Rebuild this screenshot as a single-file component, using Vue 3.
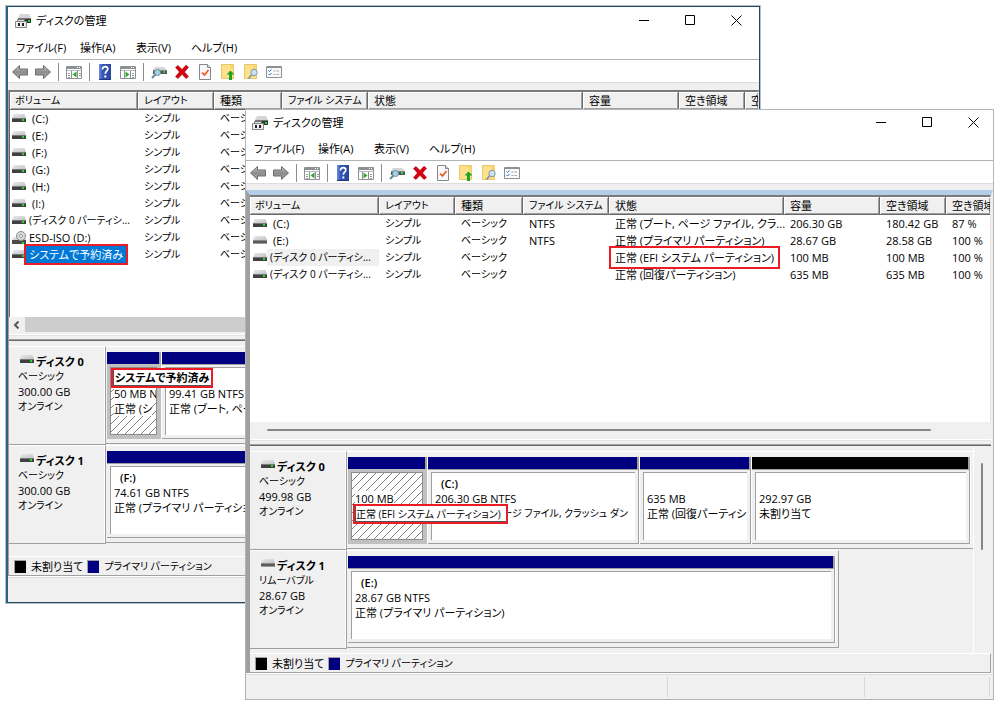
<script setup>
const cell = (volume, status = '', fs = '', size = '', free = '', pct = '', extra = {}) => ({
  volume, layout: 'シンプル', kind: 'ベーシック', fs, status, size, free, pct, icon: 'drive', ...extra
})

const headings = [
  { text: 'ボリューム', kana: true },
  { text: 'レイアウト', kana: true },
  { text: '種類' },
  { text: 'ファイル システム', kana: true },
  { text: '状態' },
  { text: '容量' },
  { text: '空き領域' },
  { text: '空き領域' }
]

const menus = ['ファイル(F)', '操作(A)', '表示(V)', 'ヘルプ(H)']

const tools = [
  { icon: 'prev', label: '戻る' },
  { icon: 'next', label: '進む' },
  { sep: true },
  { icon: 'tree', label: 'コンソール ツリー' },
  { sep: true },
  { icon: 'help', label: 'ヘルプ' },
  { icon: 'action', label: '操作ウィンドウ' },
  { sep: true },
  { icon: 'rescan', label: '再スキャン' },
  { icon: 'delete', label: '削除' },
  { icon: 'check', label: 'プロパティ' },
  { icon: 'up', label: '上へ' },
  { icon: 'find', label: '検索' },
  { icon: 'options', label: '設定' }
]

const windows = [
  {
    id: 'back',
    cols: [128, 76, 68, 86, 215, 96, 66],
    rows: [
      cell('(C:)', '', '', '', '', '', { letter: true }),
      cell('(E:)', '', '', '', '', '', { letter: true }),
      cell('(F:)', '', '', '', '', '', { letter: true }),
      cell('(G:)', '', '', '', '', '', { letter: true }),
      cell('(H:)', '', '', '', '', '', { letter: true }),
      cell('(I:)', '', '', '', '', '', { letter: true }),
      cell('(ディスク 0 パーティシ...', '', '', '', '', '', { kana: true }),
      cell('ESD-ISO (D:)', '', '', '', '', '', { icon: 'disc' }),
      cell('システムで予約済み', '', '', '', '', '', { selected: true })
    ],
    disks: [
      {
        name: 'ディスク 0', kind: 'ベーシック', size: '300.00 GB', icon: 'drive', segments: [
          { width: 55, hatched: true, lines: ['', '50 MB N', '正常 (シ'], note: 'システムで予約済み', noteAt: 'top' },
          { width: 400, lines: ['', '99.41 GB NTFS', '正常 (ブート, ページ ファイル)'] }
        ]
      },
      {
        name: 'ディスク 1', kind: 'ベーシック', size: '300.00 GB', icon: 'drive', segments: [
          { width: 455, letter: '(F:)', lines: ['74.61 GB NTFS', '正常 (プライマリ パーティション)'] }
        ]
      }
    ]
  },
  {
    id: 'front',
    cols: [129, 76, 68, 86, 175, 96, 66],
    rows: [
      cell('(C:)', '正常 (ブート, ページ ファイル, クラ...', 'NTFS', '206.30 GB', '180.42 GB', '87 %', { letter: true }),
      cell('(E:)', '正常 (プライマリ パーティション)', 'NTFS', '28.67 GB', '28.58 GB', '100 %', { letter: true, icon: 'usb' }),
      cell('(ディスク 0 パーティシ...', '正常 (EFI システム パーティション)', '', '100 MB', '100 MB', '100 %', { dim: true, marked: true, kana: true }),
      cell('(ディスク 0 パーティシ...', '正常 (回復パーティション)', '', '635 MB', '635 MB', '100 %', { kana: true })
    ],
    disks: [
      {
        name: 'ディスク 0', kind: 'ベーシック', size: '499.98 GB', icon: 'drive', segments: [
          { width: 80, hatched: true, lines: ['', '100 MB'], note: '正常 (EFI システム パーティション)', noteAt: 'low' },
          { width: 212, letter: '(C:)', kana: true, lines: ['206.30 GB NTFS', '正常 (ブート, ページ ファイル, クラッシュ ダン'] },
          { width: 112, lines: ['', '635 MB', '正常 (回復パーティシ'] },
          { width: 219, free: true, lines: ['', '292.97 GB', '未割り当て'] }
        ]
      },
      {
        name: 'ディスク 1', kind: 'リムーバブル', size: '28.67 GB', icon: 'usb', segments: [
          { width: 488, letter: '(E:)', lines: ['28.67 GB NTFS', '正常 (プライマリ パーティション)'] }
        ]
      }
    ]
  }
]
</script>

<template>
  <main class="desktop">
    <svg class="defs" aria-hidden="true">
      <defs>
        <linearGradient id="gTop" x1="0" y1="0" x2="1" y2="1">
          <stop offset="0" stop-color="#e9eaec" /><stop offset="1" stop-color="#bfc3c7" />
        </linearGradient>
        <linearGradient id="gArrow" x1="0" y1="0" x2="0" y2="1">
          <stop offset="0" stop-color="#c6c6c6" /><stop offset="0.5" stop-color="#8d8d8d" /><stop offset="1" stop-color="#a9a9a9" />
        </linearGradient>
        <linearGradient id="gHelp" x1="0" y1="0" x2="1" y2="0">
          <stop offset="0" stop-color="#6f8fdc" /><stop offset="0.3" stop-color="#3556b8" /><stop offset="1" stop-color="#2a479f" />
        </linearGradient>
        <pattern id="hatch" width="8" height="8" patternUnits="userSpaceOnUse">
          <path d="M-1 1L1 -1M-1 9L9 -1M7 9L9 7" stroke="#808080" stroke-width="1" />
        </pattern>
        <symbol id="drive" viewBox="0 0 14 9">
          <path d="M1.5 0h11L14 4H0z" fill="url(#gTop)" />
          <path d="M0 4h14v4H0z" fill="#404040" /><path d="M0 4h14v1H0z" fill="#777" />
          <rect x="10" y="5" width="2" height="2" fill="#1fe01f" />
        </symbol>
        <symbol id="usb" viewBox="0 0 14 9">
          <path d="M1.5 0h11L14 4H0z" fill="url(#gTop)" />
          <path d="M0 4h14v4H0z" fill="#5c5c5c" /><path d="M0 4h14v1H0z" fill="#8a8a8a" /><path d="M0 7h14v1H0z" fill="#999" />
        </symbol>
        <symbol id="disc" viewBox="0 0 14 14">
          <path d="M1.5 6h11L14 9H0z" fill="url(#gTop)" /><path d="M0 9h14v4H0z" fill="#4a4a4a" />
          <rect x="10" y="11" width="2" height="2" fill="#1fe01f" />
          <circle cx="9" cy="5" r="4.5" fill="#d9d9d9" stroke="#8c8c8c" /><circle cx="9" cy="5" r="1.5" fill="#fff" stroke="#999" />
        </symbol>
        <symbol id="stack" viewBox="0 0 16 16">
          <path d="M5 1h9l2 4H3z" fill="#d3d5d8" /><path d="M3 5h13v5H3z" fill="#333" />
          <path d="M3 5h13v1H3z" fill="#777" /><rect x="13" y="7" width="2" height="2" fill="#1fe01f" />
          <path d="M2.5 6.5h7v3h-7z" fill="#dcdcdc" stroke="#777" /><path d="M.5 8.5h11v6H.5z" fill="#eee" stroke="#868686" />
          <path d="M3 10h2v3H3zM7 10h2v3H7z" fill="#222" />
        </symbol>
        <symbol id="prev" viewBox="0 0 16 16">
          <path d="M.5 8L7.500 1.500V5h8v6h-8v3.500z" fill="url(#gArrow)" stroke="#6d6d6d" />
        </symbol>
        <symbol id="next" viewBox="0 0 16 16">
          <path d="M15.500 8L8.500 1.500V5h-8v6h8v3.500z" fill="url(#gArrow)" stroke="#6d6d6d" />
        </symbol>
        <symbol id="tree" viewBox="0 0 16 16">
          <path d="M.5 2.500h15v12H.5z" fill="#fff" stroke="#8b9095" /><path d="M1 3h14v2H1z" fill="#8b9095" />
          <path d="M11 3.500h1M13 3.500h1" stroke="#fff" /><path d="M1 6.500h14" stroke="#b7bbbf" /><path d="M5.500 7v8M11.500 7v8" stroke="#8b9095" />
          <path d="M2 9.500h2M2 11.500h2M2 13.500h2M13 9.500h2M13 11.500h2" stroke="#999" /><path d="M10.500 7.500v6L6.500 10.500z" fill="#31a62f" />
        </symbol>
        <symbol id="action" viewBox="0 0 16 16">
          <path d="M.5 2.500h15v12H.5z" fill="#fff" stroke="#8b9095" /><path d="M1 3h14v2H1z" fill="#8b9095" />
          <path d="M11 3.500h1M13 3.500h1" stroke="#fff" /><path d="M1 6.500h14" stroke="#b7bbbf" /><path d="M4.500 7v8M10.500 7v8" stroke="#8b9095" />
          <path d="M12 9.500h2M12 11.500h2M12 13.500h2" stroke="#999" /><path d="M5.500 7.500v6L9.500 10.500z" fill="#31a62f" />
        </symbol>
        <symbol id="help" viewBox="0 0 16 16">
          <path d="M2 0h12v16H2z" fill="url(#gHelp)" /><path d="M2 15h12v1H2z" fill="#1f357c" />
          <path d="M5.500 5.500C5.500 3.300 7 2.700 8.200 2.700c1.500 0 2.600.9 2.600 2.400 0 1.900-2.500 2.400-2.500 4.600" fill="none" stroke="#fff" stroke-width="1.700" />
          <rect x="7.300" y="11.500" width="2" height="2" fill="#fff" />
        </symbol>
        <symbol id="rescan" viewBox="0 0 16 16">
          <path d="M4 3h9l3 3H2z" fill="#d3d6d9" /><path d="M2 6h14v4H2z" fill="#505457" /><path d="M2 6h14v1H2z" fill="#85898c" />
          <rect x="12" y="7" width="2" height="2" fill="#1fe01f" /><circle cx="6.500" cy="8.500" r="3" fill="#a7cfe6" stroke="#6f8da0" />
          <path d="M4.500 10.500L1 14" stroke="#6e8796" stroke-width="2" />
        </symbol>
        <symbol id="delete" viewBox="0 0 16 16">
          <path d="M1.500 3.500L4 1.500l4 4 4-4.200 2.500 2L10.500 8l4 4.500-2.500 2-4-4.200-4 4.200-2.500-2 4-4.500z" fill="#d8000f" stroke="#a30008" stroke-width=".6" />
        </symbol>
        <symbol id="check" viewBox="0 0 16 16">
          <path d="M2.500.5h8l3 3v12h-11z" fill="#f8f8fa" stroke="#85888c" /><path d="M10.500.5v3h3" fill="#ddd" stroke="#85888c" />
          <path d="M5 8.500l2.500 2.500 4-5" fill="none" stroke="#f0561d" stroke-width="1.700" />
        </symbol>
        <symbol id="up" viewBox="0 0 16 16">
          <path d="M1.500.5h12v14h-12z" fill="#ffe08a" stroke="#e6c76a" /><path d="M10 1h3.500v4H10z" fill="#fbd56e" />
          <path d="M10.500 6.500l4 4h-2.500V16H9v-5.500H6.500z" fill="#21a32a" />
        </symbol>
        <symbol id="find" viewBox="0 0 16 16">
          <path d="M1.500.5h12v14h-12z" fill="#ffe08a" stroke="#e6c76a" /><path d="M10 1h3.500v4H10z" fill="#fbd56e" />
          <circle cx="11" cy="8.500" r="3.200" fill="#c9e3f2" stroke="#7d97a6" /><path d="M8.500 11l-3 3.500" stroke="#7d97a6" stroke-width="1.800" />
        </symbol>
        <symbol id="options" viewBox="0 0 16 16">
          <path d="M.5 2.500h15v11H.5z" fill="#fafafa" stroke="#8b9095" /><path d="M1 3h14v1H1z" fill="#8b9095" />
          <path d="M2.500 6.500l1 1 2-2M2.500 10l1 1 2-2" fill="none" stroke="#1979ca" /><path d="M7.500 7h2M10.500 7H13M7.500 10.500h2M10.500 10.500H13" stroke="#a5a8ac" />
        </symbol>
      </defs>
    </svg>

    <section v-for="w in windows" :key="w.id" class="window" :class="w.id">
      <header class="title">
        <svg class="app-icon"><use href="#stack" /></svg>
        <h1>ディスクの管理</h1>
        <div class="caption">
          <button aria-label="最小化"><svg viewBox="0 0 11 11"><path d="M0 5.500h10" /></svg></button>
          <button aria-label="最大化"><svg viewBox="0 0 11 11"><path d="M.5.5h9v9h-9z" /></svg></button>
          <button aria-label="閉じる"><svg viewBox="0 0 11 11"><path d="M.5.5l10 10M10.500.5l-10 10" /></svg></button>
        </div>
      </header>

      <nav class="menu">
        <button v-for="m in menus" :key="m">{{ m }}</button>
      </nav>

      <div class="toolbar">
        <template v-for="(t, i) in tools" :key="i">
          <span v-if="t.sep" class="sep"></span>
          <button v-else :aria-label="t.label"><svg><use :href="'#' + t.icon" /></svg></button>
        </template>
      </div>

      <div class="client">
        <div class="list">
          <table>
            <colgroup>
              <col v-for="(c, i) in w.cols" :key="i" :style="{ width: c + 'px' }" />
              <col />
            </colgroup>
            <thead>
              <tr><th v-for="(h, i) in headings" :key="i" scope="col" :class="{ kana: h.kana }">{{ h.text }}</th></tr>
            </thead>
            <tbody>
              <tr v-for="(r, i) in w.rows" :key="i">
                <td class="name">
                  <div class="volume">
                    <svg :class="{ tall: r.icon === 'disc' }"><use :href="'#' + r.icon" /></svg>
                    <span :class="{ letter: r.letter, selected: r.selected, dim: r.dim, kana: r.kana }">{{ r.volume }}</span>
                  </div>
                </td>
                <td class="kana">{{ r.layout }}</td>
                <td class="kana">{{ r.kind }}</td>
                <td>{{ r.fs }}</td>
                <td><span :class="{ marked: r.marked }">{{ r.status }}</span></td>
                <td>{{ r.size }}</td>
                <td>{{ r.free }}</td>
                <td>{{ r.pct }}</td>
              </tr>
            </tbody>
          </table>
        </div>
        <div class="hscroll">
          <button v-if="w.id === 'back'" aria-label="左へスクロール"><svg viewBox="0 0 8 8"><path d="M5.500.5L2 4l3.500 3.500" /></svg></button>
          <span class="thumb"></span>
        </div>
        <div class="splitter"></div>

        <div class="pane">
          <div class="map">
            <div v-for="d in w.disks" :key="d.name" class="disk">
              <div class="label">
                <h2><svg><use :href="'#' + d.icon" /></svg>{{ d.name }}</h2>
                <p class="kana">{{ d.kind }}</p>
                <p>{{ d.size }}</p>
                <p class="kana">オンライン</p>
              </div>
              <div class="track">
                <div v-for="(s, i) in d.segments" :key="i" class="segment" :class="{ chosen: s.hatched }" :style="{ width: s.width + 'px' }">
                  <div class="bar" :class="{ free: s.free }"></div>
                  <div class="body">
                    <div class="box">
                      <svg v-if="s.hatched" class="hatching"><rect width="100%" height="100%" fill="url(#hatch)" /></svg>
                      <p v-if="s.letter" class="drive-letter">{{ s.letter }}</p>
                      <p v-for="(l, j) in s.lines" :key="j" :class="{ kana: s.kana && j === 1 }"><span>{{ l }}</span></p>
                      <span v-if="s.note" class="note" :class="s.noteAt">{{ s.note }}</span>
                    </div>
                  </div>
                </div>
              </div>
            </div>
          </div>
          <div v-if="w.id === 'front'" class="vscroll"><span></span></div>
        </div>

        <div class="legend">
          <i class="swatch black"></i><span>未割り当て</span>
          <i class="swatch navy"></i><span class="kana">プライマリ パーティション</span>
        </div>
      </div>
      <footer class="status"><span></span><span></span><span></span></footer>
    </section>
  </main>
</template>

<style>
body { background: #fff; }
</style>

<style scoped>
.desktop {
  position: relative;
  height: 100vh;
  min-height: 640px;
  overflow: hidden;
  font: 11px/15px "Open Sans", "Noto Sans CJK JP", sans-serif;
  font-feature-settings: "palt";
  color: #000;
}
.desktop *, .desktop *::before { box-sizing: border-box; }
.defs { position: absolute; width: 0; height: 0; }
button { border: 0; padding: 0; margin: 0; background: none; font: inherit; font-feature-settings: inherit; color: inherit; }
h1, h2, p { margin: 0; font: inherit; }
.desktop .kana { font-size: 10px; }

.window { position: absolute; display: flex; flex-direction: column; background: #f0f0f0; }
.back { inset: 6px 240px 101px 6px; border: solid #1d4b6b; border-width: 1px 1px 1px 2px; border-left-color: #2b6180; box-shadow: 0 0 0 1px #bdbdbd; }
.front { inset: 109px 6px 4px 245px; border: 1px solid #b4b4b4; }

.title { display: flex; align-items: center; height: 27px; background: #fff; padding-left: 6px; gap: 5px; flex: none; }
.front .title { height: 25px; }
.back .title { padding-left: 7px; padding-right: 3px; }
.app-icon { width: 16px; height: 16px; }
.caption { display: flex; gap: 6px; margin-left: auto; }
.caption button { width: 40px; height: 25px; display: grid; place-items: center; }
.caption svg { width: 11px; height: 11px; fill: none; stroke: #000; stroke-width: 1; }

.menu { display: grid; grid-template-columns: 64px 56px 55px auto; justify-content: start; height: 26px; flex: none; padding-left: 8px; background: #fff; border-bottom: 1px solid #b0b4b7; }
.menu button { text-align: left; white-space: nowrap; padding-top: 1px; }

.toolbar { display: flex; align-items: center; height: 23px; flex: none; padding-top: 2px; background: #fff; border-bottom: 1px solid #dcdcdc; }
.toolbar button { width: 23px; height: 20px; display: grid; place-items: center; }
.toolbar svg { width: 16px; height: 16px; }
.sep { width: 8px; height: 18px; display: flex; justify-content: center; }
.sep::before { content: ""; width: 1px; background: #8d8d8d; }

.client { flex: 1; min-height: 0; display: flex; flex-direction: column; margin-top: 6px; border-left: 1px solid #a0a0a0; }
.back .client { margin-top: 7px; }
.front .client { border-top: 5px solid #b5cee8; border-left: 4px solid #a0a0a0; border-right: 2px solid #f0f0f0; }

.list { flex: 1; min-height: 0; overflow: hidden; background: #fff; border-top: 2px solid #7a7a7a; border-right: 1px solid #e3e3e3; }
.back .list { border-left: 1px solid #696969; }
table { width: 100%; table-layout: fixed; border-collapse: separate; border-spacing: 0; }
th, td { padding: 0 0 0 6px; text-align: left; font-weight: normal; white-space: nowrap; }
th { height: 18px; line-height: 15px; background: #f0f0f0; border-right: 1px solid #696969; border-bottom: 1px solid #696969; box-shadow: inset 1px 1px #fff, inset -1px -1px #a0a0a0; }
th:last-child { border-right: 0; overflow: hidden; }
td { height: 17px; line-height: 17px; }
th:first-child { padding-left: 5px; }
td.name { padding-left: 2px; }
.front td.name { padding-left: 3px; }
.volume { display: flex; align-items: center; height: 17px; }
.volume svg { width: 14px; height: 9px; flex: none; }
.volume svg.tall { height: 14px; }
.volume span { padding-left: 3px; }
.volume .letter { padding-left: 6px; }
.volume .dim { flex: 1; background: #f0f0f0; }
.volume .selected { background: #0078d7; color: #fff; padding-right: 3px; outline: 2px solid #ed1c24; outline-offset: 0; }
.marked { display: inline-block; height: 17px; margin: 0 -3px; padding: 0 3px; outline: 2px solid #ed1c24; outline-offset: 1px; vertical-align: top; }

.hscroll { flex: none; height: 17px; display: flex; background: #f0f0f0; }
.hscroll button { width: 16px; height: 16px; display: grid; place-items: center; }
.hscroll svg { width: 8px; height: 8px; fill: none; stroke: #555; stroke-width: 2; }
.back .hscroll .thumb { flex: 1; height: 15px; background: #cdcdcd; }
.front .hscroll { padding: 7px 60px 0 17px; }
.front .hscroll .thumb { flex: 1; height: 2px; background: #858585; border-radius: 1px; }
.splitter { flex: none; height: 7px; border-top: 1px solid #fff; border-bottom: 1px solid #696969; box-shadow: inset 0 1px #e3e3e3, inset 0 -1px #a0a0a0; }

.pane { flex: none; display: flex; }
.map { flex: 1; min-width: 0; padding: 5px 0 4px; overflow: hidden; }
.back .map { padding-bottom: 12px; }
.front .map { border-right: 1px solid #fff; }
.disk { display: flex; width: fit-content; max-width: 100%; }
.label { flex: none; width: 97px; height: 99px; padding: 7px 0 0 9px; border-top: 1px solid #fff; border-bottom: 1px solid #a0a0a0; border-right: 1px solid #a0a0a0; box-shadow: inset -1px 0 #fff; }
.label h2 { display: flex; align-items: flex-start; gap: 2px; padding-left: 2px; font-weight: bold; }
.label h2 svg { width: 14px; height: 9px; margin-top: 1px; }
.track { display: flex; flex: 1; min-width: 0; height: 98px; padding: 5px 2px 4px 1px; border-top: 1px solid #fff; border-bottom: 1px solid #a0a0a0; }
.disk:last-child .track { border-right: 1px solid #a0a0a0; }
.segment { flex: 0 1 auto; min-width: 0; display: flex; flex-direction: column; border-right: 1px solid #fff; }
.segment:not(:last-child) { flex-shrink: 0; }
.bar { height: 13px; background: #000080; border-right: 2px solid #a0a0a0; }
.bar.free { background: #000; }
.body { flex: 1; border-top: 1px solid #a0a0a0; border-right: 1px solid #a0a0a0; border-bottom: 1px solid #a0a0a0; padding: 2px 3px 3px; }
.box { position: relative; height: 68px; background: #fff; border-top: 1px solid #a0a0a0; border-left: 1px solid #a0a0a0; padding: 3px 0 0 3px; }
.chosen .body { background: #c0c0c0; border-color: #c0c0c0; }
.chosen .box { border: 1px solid #8c8c8c; }
.box p { position: relative; height: 15px; white-space: nowrap; overflow: hidden; }
.box p.drive-letter { padding-left: 6px; font-weight: 600; }
.chosen p span { background: #fff; }
.hatching { position: absolute; inset: 0; width: 100%; height: 100%; }
.note { position: absolute; z-index: 2; left: 1px; padding: 0 0 0 1px; line-height: 16px; height: 20px; white-space: nowrap; background: #fff; border: 2px solid #ed1c24; box-shadow: inset 1px -1px #555; }
.note.top { left: 0; top: 0; padding: 0 2px; font-weight: bold; }
.note.low { top: 31px; padding-right: 5px; font-size: 10px; }

.vscroll { width: 17px; padding: 17px 0 0 7px; }
.vscroll span { display: block; width: 2px; height: 87px; background: #858585; border-radius: 1px; }

.legend { flex: none; display: flex; align-items: center; height: 20px; padding-left: 5px; border: solid; border-width: 1px 1px 1px 0; border-color: #fff #a0a0a0 #a0a0a0; }
.swatch { width: 12px; height: 13px; border: solid #a0a0a0; border-width: 1px 0 0 1px; margin-right: 5px; }
.swatch.black { background: #000; }
.swatch.navy { background: #000080; margin-left: 4px; }
.status { flex: none; height: 26px; display: flex; padding: 4px 3px 2px 0; box-shadow: inset 0 1px #fff, inset 0 2px #dcdcdc; }
.status span { width: 125px; border-right: 1px solid #d7d7d7; }
.status span:first-child { flex: 1; }
.status span:nth-child(2) { width: 197px; }
</style>
